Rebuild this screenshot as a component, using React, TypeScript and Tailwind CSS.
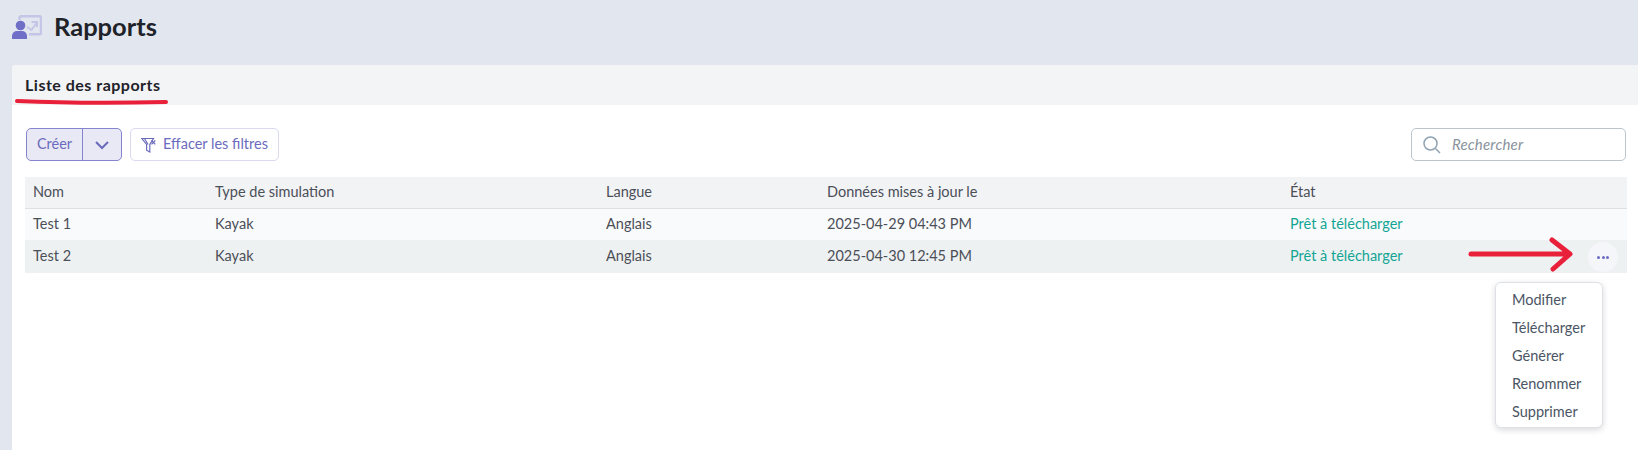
import React from "react";

const rows = [
  { nom: "Test 1", date: "2025-04-29 04:43 PM", bg: "bg-[#f9fafb]", h: "h-[31px]" },
  { nom: "Test 2", date: "2025-04-30 12:45 PM", bg: "bg-[#eef1f2]", h: "h-[33px]" },
];
const cols = "grid grid-cols-[182px_391px_221px_463px_1fr] pl-2 pb-[2px] items-center";

export default function App() {
  return (
    <div className="relative h-[450px] w-[1638px] overflow-hidden bg-[#e2e6ee] text-[14.5px] font-['Lato',sans-serif] text-[#4b4f58]">
      <header className="flex h-[65px] items-start pl-[12px] pt-[11px]">
        <svg width="30" height="24" viewBox="0 0 30 24" className="mt-[4px]">
          <path d="M7.500 5V3a1.800 1.800 0 0 1 1.800-1.800h18.400A1.800 1.800 0 0 1 29 3v14.500a1.800 1.800 0 0 1-1.800 1.800H17" fill="none" stroke="#c3c6e6" strokeWidth="2.500" />
          <path d="M15 12l4.500 3 5-7M19.500 7h5.500v5" fill="none" stroke="#c3c6e6" strokeWidth="2" />
          <circle cx="8.500" cy="10.500" r="4.800" fill="#6f6fc7" />
          <path d="M0 24v-3a5 5 0 0 1 5-5h5a5 5 0 0 1 5 5v3z" fill="#6f6fc7" />
        </svg>
        <h1 className="ml-[12px] text-[25.5px] leading-[30px] font-bold text-[#1f2229]">Rapports</h1>
      </header>

      <main className="ml-[12px] h-[385px] rounded-tl-[4px] bg-white">
        <div className="h-[40px] rounded-tl-[4px] bg-[#f3f4f6] pl-[13px] pt-[10px] text-[16px] leading-[20px] font-bold tracking-[0.5px] text-[#1f2229]">
          Liste des rapports
        </div>

        <div className="ml-[13px] mt-[23px] w-[1602px]">
          <div className="flex h-[33px] items-center px-[1px]">
            <div className="flex h-[33px] w-[96px] rounded-[5px] border border-[#8484cf] bg-[#e9e9f6] text-[#6b6bbd]">
              <span className="flex w-[56px] items-center justify-center border-r border-[#8484cf] pb-[1px]">Créer</span>
              <span className="flex flex-1 items-center justify-center">
                <svg width="16" height="10" viewBox="0 0 16 10" fill="none" stroke="#6b6bbd" strokeWidth="2"><path d="M2 2l6 6 6-6" /></svg>
              </span>
            </div>
            <button className="ml-[8px] flex h-[33px] w-[149px] items-center gap-[7px] rounded-[5px] border border-[#d9d9f0] bg-white pl-[10px] text-[#6b6bbd]">
              <svg width="15" height="16" viewBox="0 0 15 16" fill="none" stroke="#6b6bbd" strokeWidth="1.200">
                <path d="M0.800 1.500H12.500L8.800 7.500v7.500l-3.200-1.800V7.500z" />
                <path d="M3.500 1.500l3.500 6" />
                <path d="M10.500 3.500l3.800 3.800M14.300 3.500l-3.800 3.800" />
              </svg>
              <span className="pb-[1px]">Effacer les filtres</span>
            </button>
            <label className="ml-auto flex h-[33px] w-[215px] items-center rounded-[5px] border border-[#bcc5cd] bg-white pl-[11px] text-[15px] italic tracking-[0.2px] text-[#8a939e]">
              <svg width="18" height="18" viewBox="0 0 18 18" fill="none" stroke="#8fa3b3" strokeWidth="1.500"><circle cx="7.500" cy="7.500" r="6.500" /><path d="M12.500 12.500l4.500 4.500" /></svg>
              <span className="ml-[11px] pb-[1px]">Rechercher</span>
            </label>
          </div>

          <div className="mt-[16px]">
            <div className={`${cols} h-[32px] border-b border-[#dde1e5] bg-[#f2f3f5]`}>
              <span>Nom</span>
              <span>Type de simulation</span>
              <span>Langue</span>
              <span>Données mises à jour le</span>
              <span>État</span>
            </div>
            {rows.map((r) => (
              <div key={r.nom} className={`${cols} ${r.h} ${r.bg}`}>
                <span>{r.nom}</span>
                <span>Kayak</span>
                <span>Anglais</span>
                <span>{r.date}</span>
                <span className="text-[#12a594]">Prêt à télécharger</span>
              </div>
            ))}
          </div>
        </div>
      </main>

      {/* annotation: underline */}
      <svg className="absolute left-[14px] top-[97px]" width="156" height="10" viewBox="0 0 156 10">
        <path d="M3 4C50 6 110 6 152 5" stroke="#e8203a" strokeWidth="4" strokeLinecap="round" fill="none" />
      </svg>
      {/* annotation: arrow */}
      <svg className="absolute left-[1468px] top-[236px]" width="106" height="38" viewBox="0 0 106 38">
        <path d="M3 18H100M84 4l18 14L85 33" stroke="#e8203a" strokeWidth="5" strokeLinecap="round" strokeLinejoin="round" fill="none" />
      </svg>
      {/* row action */}
      <button className="absolute left-[1588px] top-[242px] flex h-[30px] w-[30px] items-center justify-center gap-[1.500px] rounded-full bg-[#f5f6fa]">
        <i className="h-[3px] w-[3px] rounded-full bg-[#6b6bc5]" />
        <i className="h-[3px] w-[3px] rounded-full bg-[#6b6bc5]" />
        <i className="h-[3px] w-[3px] rounded-full bg-[#6b6bc5]" />
      </button>
      {/* menu */}
      <div className="absolute left-[1495px] top-[282px] flex w-[108px] flex-col rounded-[6px] border border-[#dde1e6] bg-white pt-[3px] pb-[1px] pl-[16px] shadow-[0_2px_6px_rgba(0,0,0,0.15)]">
        {["Modifier", "Télécharger", "Générer", "Renommer", "Supprimer"].map((m) => (
          <div key={m} className="flex h-[28px] items-center text-[#4b5563]">{m}</div>
        ))}
      </div>
    </div>
  );
}
